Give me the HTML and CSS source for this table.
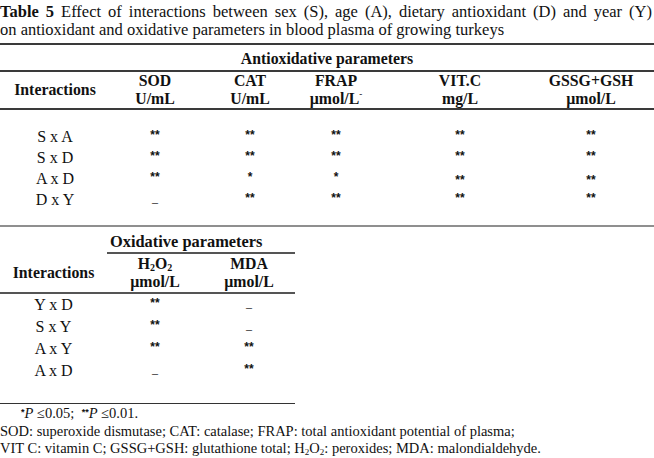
FILE: index.html
```html
<!DOCTYPE html>
<html>
<head>
<meta charset="utf-8">
<link rel="stylesheet" href="styles.css">
</head>
<body>
<div class="page">
  <p class="caption"><span class="cap-l1"><b>Table 5</b> Effect of interactions between sex (S), age (A), dietary antioxidant (D) and year (Y)</span><span class="cap-l2">on antioxidant and oxidative parameters in blood plasma of growing turkeys</span></p>

  <table class="t1">
    <colgroup>
      <col class="c-int"><col class="c-sod"><col class="c-cat"><col class="c-frap"><col class="c-vit"><col class="c-gssg">
    </colgroup>
    <thead>
      <tr class="group-row"><th colspan="6">Antioxidative parameters</th></tr>
      <tr class="head-row">
        <th>Interactions</th>
        <th>SOD<br>U/mL</th>
        <th>CAT<br>U/mL</th>
        <th>FRAP<br>µmol/L<sup>-</sup></th>
        <th>VIT.C<br>mg/L</th>
        <th class="last">GSSG+GSH<br>µmol/L</th>
      </tr>
    </thead>
    <tbody>
      <tr class="spacer"><td colspan="6"></td></tr>
      <tr><td class="lab">S x A</td><td><span class="st">**</span></td><td><span class="st">**</span></td><td><span class="st">**</span></td><td><span class="st">**</span></td><td class="last"><span class="st">**</span></td></tr>
      <tr><td class="lab">S x D</td><td><span class="st">**</span></td><td><span class="st">**</span></td><td><span class="st">**</span></td><td><span class="st">**</span></td><td class="last"><span class="st">**</span></td></tr>
      <tr><td class="lab">A x D</td><td><span class="st">**</span></td><td><span class="st">*</span></td><td><span class="st">*</span></td><td><span class="st low">**</span></td><td class="last"><span class="st low">**</span></td></tr>
      <tr><td class="lab">D x Y</td><td><span class="dash">_</span></td><td><span class="st">**</span></td><td><span class="st">**</span></td><td><span class="st">**</span></td><td class="last"><span class="st">**</span></td></tr>
      <tr class="spacer-end"><td colspan="6"></td></tr>
    </tbody>
  </table>

  <table class="t2">
    <colgroup>
      <col class="d-int"><col class="d-h2o2"><col class="d-mda">
    </colgroup>
    <thead>
      <tr class="group-row2"><th></th><th colspan="2" class="grp">Oxidative parameters</th></tr>
      <tr class="head-row2">
        <th>Interactions</th>
        <th>H<sub>2</sub>O<sub>2</sub><br>µmol/L</th>
        <th>MDA<br>µmol/L</th>
      </tr>
    </thead>
    <tbody>
      <tr><td class="lab">Y x D</td><td><span class="st">**</span></td><td><span class="dash">_</span></td></tr>
      <tr><td class="lab">S x Y</td><td><span class="st">**</span></td><td><span class="dash">_</span></td></tr>
      <tr><td class="lab">A x Y</td><td><span class="st">**</span></td><td><span class="st">**</span></td></tr>
      <tr><td class="lab">A x D</td><td><span class="dash">_</span></td><td><span class="st">**</span></td></tr>
      <tr class="spacer-end2"><td colspan="3"></td></tr>
    </tbody>
  </table>

  <div class="notes">
    <p class="sig"><span class="ns">*</span><i>P</i> ≤0.05;&nbsp; <span class="ns">**</span><i>P</i> ≤0.01.</p>
    <p>SOD: superoxide dismutase; CAT: catalase; FRAP: total antioxidant potential of plasma;</p>
    <p>VIT C: vitamin C; GSSG+GSH: glutathione total; H<sub>2</sub>O<sub>2</sub>: peroxides; MDA: malondialdehyde.</p>
  </div>
</div>
</body>
</html>
```

FILE: styles.css
```css
html, body {
  margin: 0;
  padding: 0;
  background: #fff;
}

body {
  font-family: "Liberation Serif", "Times New Roman", serif;
  color: #111;
}

.page {
  width: 654px;
}

.caption {
  box-sizing: border-box;
  margin: 0;
  padding: 3px 2px 0 0;
  font-size: 16.5px;
  line-height: 17.5px;
  height: 43px;
}

.cap-l1 {
  display: block;
  text-align: justify;
  text-align-last: justify;
  white-space: nowrap;
}

.cap-l2 {
  display: block;
  white-space: nowrap;
}

table {
  border-collapse: separate;
  border-spacing: 0;
  table-layout: fixed;
}

th, td {
  box-sizing: border-box;
  padding: 0;
  text-align: center;
  vertical-align: middle;
}

th {
  font-weight: bold;
  font-size: 15.8px;
  line-height: 18px;
}

.t1 {
  width: 654px;
  border-top: 2px solid #3a3a3a;
}

.c-int { width: 110px; }
.c-sod { width: 90px; }
.c-cat { width: 100px; }
.c-frap { width: 72px; }
.c-vit { width: 176px; }
.c-gssg { width: 106px; }

.t1 .last { padding-right: 20px; }

.group-row th {
  height: 27px;
  padding-top: 2px;
  border-bottom: 2px solid #3a3a3a;
}

.head-row th {
  height: 38px;
  border-bottom: 2px solid #3a3a3a;
}

.head-row th sup {
  font-size: 9px;
  vertical-align: 7px;
  line-height: 0;
}

.spacer td { height: 16px; }

tbody td {
  font-size: 16px;
  height: 21px;
  line-height: 21px;
}

.st {
  font-family: "Liberation Sans", Arial, sans-serif;
  font-weight: bold;
  font-size: 12px;
  line-height: 1;
  display: inline-block;
  vertical-align: 3px;
}

.st.low { vertical-align: 0; }

.dash {
  font-size: 12px;
  line-height: 1;
  display: inline-block;
  vertical-align: 3px;
}

.spacer-end td {
  height: 17px;
  border-bottom: 2px solid #8f8f8f;
}

.t2 {
  width: 295px;
}

.d-int { width: 107px; }
.d-h2o2 { width: 96px; }
.d-mda { width: 92px; }

.group-row2 th {
  height: 27px;
  vertical-align: bottom;
  padding-bottom: 1px;
}

.group-row2 .grp {
  text-align: left;
  padding-left: 3px;
  font-size: 16.4px;
  border-bottom: 2px solid #555;
}

.head-row2 th {
  height: 40px;
  border-bottom: 2px solid #555;
}

.head-row2 th sub {
  font-size: 10px;
  line-height: 0;
  vertical-align: -2px;
}

.t2 tbody td {
  height: 22px;
  line-height: 22px;
}

.spacer-end2 td {
  height: 17px;
  border-bottom: 1px solid #333;
}

.notes {
  font-size: 14.5px;
  line-height: 17.5px;
}

.notes p {
  margin: 0;
  white-space: nowrap;
}

.notes sub {
  font-size: 9px;
  line-height: 0;
  vertical-align: -2px;
}

.sig {
  padding-left: 21px;
}

.ns {
  font-family: "Liberation Sans", Arial, sans-serif;
  font-weight: bold;
  font-size: 9px;
  vertical-align: 3px;
}
```
